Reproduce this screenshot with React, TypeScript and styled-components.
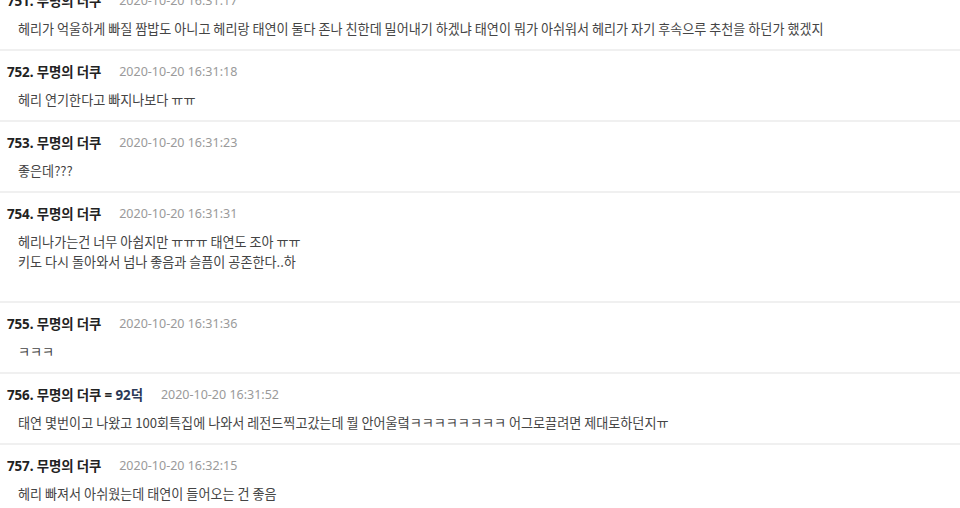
import React from "react";
import styled, { createGlobalStyle } from "styled-components";

const Global = createGlobalStyle`
  html, body { margin: 0; padding: 0; background: #fff; overflow: hidden; }
  body { font-family: "Noto Sans", "Noto Sans CJK KR", sans-serif; }
`;

const List = styled.ul`
  list-style: none;
  margin: -22px 0 0 0;
  padding: 0;
`;

const Item = styled.li`
  border-top: 2px solid #f0f0f0;
  padding: 10px 7px 10px 7px;
`;

const Header = styled.div`
  display: flex;
  align-items: center;
  height: 20px;
  gap: 18px;
`;

const Name = styled.span`
  font-family: "Noto Sans", "Noto Sans CJK KR", sans-serif;
  font-weight: 700;
  font-size: 13.4px;
  color: #222;
  letter-spacing: -0.1px;
`;

const Tag = styled.span`
  color: #2b3a57;
`;

const DateText = styled.span`
  font-family: "Noto Sans", "Noto Sans CJK KR", sans-serif;
  font-size: 12.5px;
  color: #9a9a9a;
`;

const Body = styled.div<{ $extra?: boolean }>`
  margin-top: 9px;
  padding-left: 11px;
  font-family: "Noto Sans CJK KR", "Noto Sans", sans-serif;
  font-size: 13.1px;
  line-height: 20px;
  color: #444;
  padding-bottom: ${(p) => (p.$extra ? "19px" : "0")};
`;

type Post = {
  no: number;
  tag?: string;
  date: string;
  lines: string[];
  extra?: boolean;
};

const posts: Post[] = [
  {
    no: 751,
    date: "2020-10-20 16:31:17",
    lines: [
      "헤리가 억울하게 빠질 짬밥도 아니고 헤리랑 태연이 둘다 존나 친한데 밀어내기 하겠냐 태연이 뭐가 아쉬워서 헤리가 자기 후속으루 추천을 하던가 했겠지",
    ],
  },
  { no: 752, date: "2020-10-20 16:31:18", lines: ["헤리 연기한다고 빠지나보다 ㅠㅠ"] },
  { no: 753, date: "2020-10-20 16:31:23", lines: ["좋은데???"] },
  {
    no: 754,
    date: "2020-10-20 16:31:31",
    lines: ["헤리나가는건 너무 아쉽지만 ㅠㅠㅠ 태연도 조아 ㅠㅠ", "키도 다시 돌아와서 넘나 좋음과 슬픔이 공존한다..하"],
    extra: true,
  },
  { no: 755, date: "2020-10-20 16:31:36", lines: ["ㅋㅋㅋ"] },
  {
    no: 756,
    tag: "92덕",
    date: "2020-10-20 16:31:52",
    lines: ["태연 몇번이고 나왔고 100회특집에 나와서 레전드찍고갔는데 뭘 안어울렼ㅋㅋㅋㅋㅋㅋㅋㅋ 어그로끌려면 제대로하던지ㅠ"],
  },
  { no: 757, date: "2020-10-20 16:32:15", lines: ["헤리 빠져서 아쉬웠는데 태연이 들어오는 건 좋음"] },
];

export default function App() {
  return (
    <>
      <Global />
      <List>
        {posts.map((p) => (
          <Item key={p.no}>
            <Header>
              <Name>
                {p.no}. 무명의 더쿠{p.tag ? <> = <Tag>{p.tag}</Tag></> : null}
              </Name>
              <DateText>{p.date}</DateText>
            </Header>
            <Body $extra={p.extra}>
              {p.lines.map((l, i) => (
                <div key={i}>{l}</div>
              ))}
            </Body>
          </Item>
        ))}
      </List>
    </>
  );
}
